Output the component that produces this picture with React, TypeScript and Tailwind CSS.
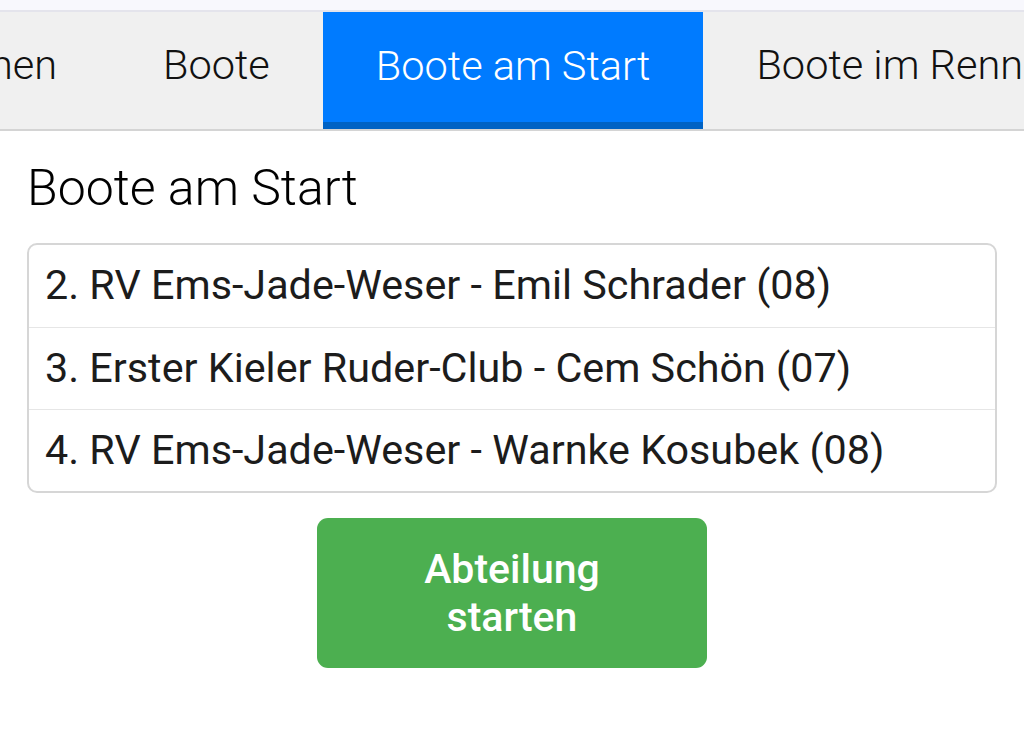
import React from "react";

const TABS = ["Boote", "Boote am Start", "Boote im Rennen", "Ergebnisse"];
const ACTIVE = 1;

const BOATS = [
  "2. RV Ems-Jade-Weser - Emil Schrader (08)",
  "3. Erster Kieler Ruder-Club - Cem Schön (07)",
  "4. RV Ems-Jade-Weser - Warnke Kosubek (08)",
];

export default function App() {
  return (
    <div className="h-[744px] w-[1024px] overflow-hidden bg-white font-['Roboto',sans-serif] text-black">
      <div className="h-[10px] bg-[#f8f8fd]" />
      <div className="h-[2px] bg-[#e4e4ec]" />

      <nav className="flex h-[119px] overflow-hidden border-b-2 border-[#d4d4d4] bg-[#f0f0f0]">
        {/* first tab is scrolled mostly out of view */}
        <div className="flex w-[110px] shrink-0 justify-end overflow-hidden">
          <div className="flex h-full items-center whitespace-nowrap px-[53px] pb-[10px] text-[41.5px] font-light text-[#111]">
            Rennen
          </div>
        </div>
        {TABS.map((tab, i) => (
          <div
            key={tab}
            className={
              i === ACTIVE
                ? "flex h-full shrink-0 items-center whitespace-nowrap border-b-[7px] border-[#0062c4] bg-[#007bff] px-[53px] pb-[1px] text-[41.5px] font-light text-white"
                : "flex h-full shrink-0 items-center whitespace-nowrap px-[53px] pb-[10px] text-[41.5px] font-light text-[#111]"
            }
          >
            {tab}
          </div>
        ))}
      </nav>

      <main className="px-[27px] pt-[25px]">
        <h2 className="text-[50px] font-light leading-[64px]">Boote am Start</h2>

        <ul className="mt-[23px] overflow-hidden rounded-[10px] border-2 border-[#d6d6d6]">
          {BOATS.map((boat, i) => (
            <li
              key={boat}
              className={
                "flex h-[82px] items-center whitespace-nowrap px-[16px] text-[41.3px] text-[#1c1c1c] " +
                (i > 0 ? "border-t border-[#e6e6e6]" : "")
              }
            >
              {boat}
            </li>
          ))}
        </ul>

        <div className="mt-[25px] flex justify-center">
          <button
            type="button"
            className="flex h-[150px] w-[390px] flex-col items-center justify-center rounded-[11px] bg-[#4caf50] text-[41px] font-medium leading-[48px] text-white"
          >
            <span>Abteilung</span>
            <span>starten</span>
          </button>
        </div>
      </main>
    </div>
  );
}
